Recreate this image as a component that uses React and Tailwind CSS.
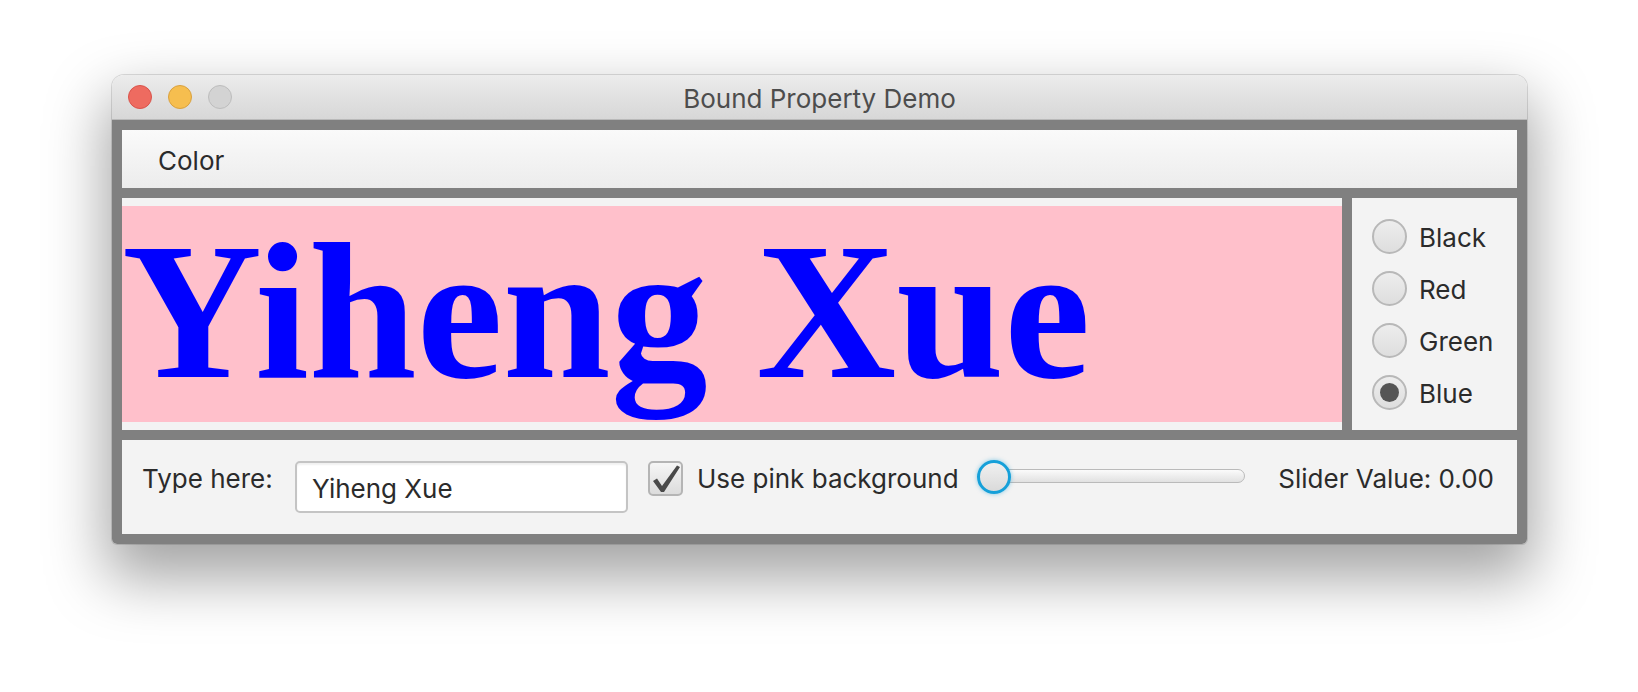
import React from "react";

const sans = { fontFamily: "Inter, 'Noto Sans', sans-serif" };

function Radio({ label, checked }) {
  return (
    <div className="flex h-[52px] items-center">
      <div className="flex h-[35px] w-[35px] items-center justify-center rounded-full border-2 border-[#b8b8b8] bg-gradient-to-b from-[#ededed] to-[#dedede]">
        {checked && <div className="h-[19px] w-[19px] rounded-full bg-[#555555]" />}
      </div>
      <span className="ml-[12px] block pt-[4px] text-[26px] leading-[32px] text-[#2b2b2b]">{label}</span>
    </div>
  );
}

export default function App() {
  return (
    <div className="min-h-[692px] w-[1638px] bg-white pl-[112px] pt-[75px]" style={sans}>
      <div className="w-[1415px] rounded-t-[12px] rounded-b-[5px] shadow-[0_28px_60px_6px_rgba(0,0,0,0.36),0_0_0_1px_rgba(0,0,0,0.12)]">
        {/* title bar */}
        <div className="relative flex h-[45px] items-center justify-center rounded-t-[12px] border-b border-[#b9b9b9] bg-gradient-to-b from-[#ececec] to-[#d7d7d7]">
          <div className="absolute left-[16px] top-[10px] flex gap-[16px]">
            <div className="h-[24px] w-[24px] rounded-full border border-[#d9534b] bg-[#ee6b60]" />
            <div className="h-[24px] w-[24px] rounded-full border border-[#d9a13f] bg-[#f6be4f]" />
            <div className="h-[24px] w-[24px] rounded-full border border-[#bdbdbd] bg-[#d3d3d3]" />
          </div>
          <span className="block pt-[4px] text-[26px] leading-[32px] text-[#4d4d4d]">Bound Property Demo</span>
        </div>
        {/* body */}
        <div className="flex flex-col gap-[10px] rounded-b-[5px] bg-[#808080] p-[10px]">
          <div className="flex h-[58px] items-center bg-gradient-to-b from-[#fafafa] to-[#ececec] pl-[36px]">
            <span className="block pt-[3px] text-[26px] leading-[32px] text-[#2b2b2b]">Color</span>
          </div>
          <div className="flex h-[232px] gap-[10px]">
            <div className="w-[1220px] bg-[#f3f3f3] py-[8px]">
              <div className="h-[216px] overflow-hidden bg-[#ffc0cb]">
                <div
                  className="whitespace-nowrap text-[194px] font-bold leading-[212px] text-[#0000ff]"
                  style={{ fontFamily: "'Liberation Serif', serif" }}
                >
                  Yiheng Xue
                </div>
              </div>
            </div>
            <div className="flex flex-1 flex-col bg-[#f3f3f3] pl-[20px] pt-[12px]">
              <Radio label="Black" />
              <Radio label="Red" />
              <Radio label="Green" />
              <Radio label="Blue" checked />
            </div>
          </div>
          <div className="flex h-[94px] items-start bg-[#f3f3f3] pl-[20px] pt-[21px] text-[26px] leading-[32px] text-[#2b2b2b]">
            <span className="block w-[130px] whitespace-nowrap pt-[2px]">Type here:</span>
            <div className="ml-[23px] flex h-[52px] w-[333px] items-center rounded-[5px] border-2 border-[#c4c4c4] bg-white pl-[15px] shadow-[inset_0_2px_2px_rgba(0,0,0,0.06)]">
              <span className="block whitespace-nowrap pt-[3px]">Yiheng Xue</span>
            </div>
            <div className="ml-[20px] h-[35px] w-[35px] rounded-[5px] border-2 border-[#b5b5b5] bg-gradient-to-b from-[#f6f6f6] to-[#dcdcdc]">
              <svg width="31" height="31" viewBox="0 0 31 31">
                <polygon points="3,18 7,15.5 12,23 27,2.5 30,4 14,29 11,29" fill="#4a4a4a" />
              </svg>
            </div>
            <span className="ml-[14px] block w-[257px] whitespace-nowrap pt-[2px]">Use pink background</span>
            <div className="relative ml-[23px] h-[33px] w-[268px]">
              <div className="ml-[16px] mt-[8px] h-[14px] w-[252px] rounded-full border border-[#bababa] bg-gradient-to-b from-[#fbfbfb] to-[#e1e1e1]" />
              <div className="absolute left-0 top-[-1px] h-[34px] w-[34px] rounded-full border-[3px] border-[#16a0d9] bg-gradient-to-b from-[#f0f0f0] to-[#dadada] shadow-[0_0_4px_rgba(22,160,217,0.5)]" />
            </div>
            <span className="ml-[33px] block w-[216px] whitespace-nowrap pt-[2px] text-right">Slider Value: 0.00</span>
          </div>
        </div>
      </div>
    </div>
  );
}
